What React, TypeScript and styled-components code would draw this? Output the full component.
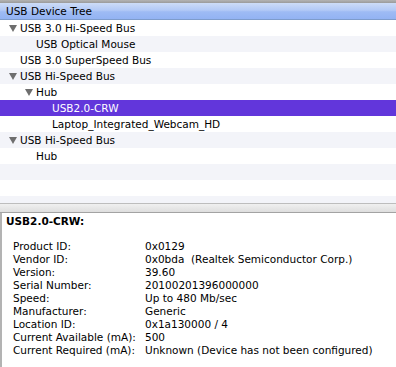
import React from "react";
import styled, { createGlobalStyle } from "styled-components";

const Global = createGlobalStyle`
  html, body { margin: 0; padding: 0; background: #fff; }
  body { font-family: "DejaVu Sans", sans-serif; font-size: 10.5px; color: #000; }
`;

const Window = styled.div`
  width: 396px;
  height: 367px;
  display: flex;
  flex-direction: column;
  overflow: hidden;
  background: #fff;
`;

const TopStrip = styled.div`
  height: 3px;
  background: linear-gradient(#b4b4b4, #9a9a9a);
  flex: none;
`;

const TreePane = styled.div`
  height: 200px;
  flex: none;
  display: flex;
  flex-direction: column;
  overflow: hidden;
`;

const Header = styled.div`
  height: 16px;
  flex: none;
  display: flex;
  align-items: center;
  padding-left: 6px;
  background: linear-gradient(#cddcf7 0%, #b2c9f6 45%, #9ebbf4 55%, #93b3f3 100%);
  border-bottom: 1px solid #7e9ccb;
`;

const Row = styled.div<{ $alt: boolean; $selected?: boolean; $level: number }>`
  height: 16px;
  flex: none;
  display: flex;
  align-items: center;
  padding-left: ${(p) => 9 + (p.$level - 1) * 16}px;
  background: ${(p) => (p.$selected ? "#6236db" : p.$alt ? "#f3f4f9" : "#fff")};
  color: ${(p) => (p.$selected ? "#fff" : "#000")};
  white-space: nowrap;
`;

const Disclosure = styled.span`
  width: 11px;
  flex: none;
  display: flex;
  align-items: center;
`;

const Splitter = styled.div`
  height: 8px;
  flex: none;
  border-top: 1px solid #bdbdbd;
  border-bottom: 1px solid #a3a3a3;
  background: linear-gradient(#f0f0f0, #dedede);
`;

const DetailPane = styled.div`
  flex: 1;
  border-left: 2px solid #b3b3b3;
  padding: 2px 0 0 4px;
  line-height: 13px;
`;

const Title = styled.div`
  font-weight: bold;
  margin-bottom: 12px;
`;

const Props = styled.div`
  display: grid;
  grid-template-columns: 132px auto;
  padding-left: 7px;
  white-space: pre;
`;

const Triangle = () => (
  <svg width="8" height="7" viewBox="0 0 8 7">
    <polygon points="0,0 8,0 4,7" fill="#6e6e6e" />
  </svg>
);

type Item = { label: string; level: number; open?: boolean; selected?: boolean };

const items: Item[] = [
  { label: "USB 3.0 Hi-Speed Bus", level: 1, open: true },
  { label: "USB Optical Mouse", level: 2 },
  { label: "USB 3.0 SuperSpeed Bus", level: 1 },
  { label: "USB Hi-Speed Bus", level: 1, open: true },
  { label: "Hub", level: 2, open: true },
  { label: "USB2.0-CRW", level: 3, selected: true },
  { label: "Laptop_Integrated_Webcam_HD", level: 3 },
  { label: "USB Hi-Speed Bus", level: 1, open: true },
  { label: "Hub", level: 2 },
  { label: "", level: 1 },
  { label: "", level: 1 },
  { label: "", level: 1 },
];

const props: [string, string][] = [
  ["Product ID:", "0x0129"],
  ["Vendor ID:", "0x0bda  (Realtek Semiconductor Corp.)"],
  ["Version:", "39.60"],
  ["Serial Number:", "20100201396000000"],
  ["Speed:", "Up to 480 Mb/sec"],
  ["Manufacturer:", "Generic"],
  ["Location ID:", "0x1a130000 / 4"],
  ["Current Available (mA):", "500"],
  ["Current Required (mA):", "Unknown (Device has not been configured)"],
];

export default function App() {
  return (
    <Window>
      <Global />
      <TopStrip />
      <TreePane>
        <Header>USB Device Tree</Header>
        {items.map((it, i) => (
          <Row key={i} $alt={i % 2 === 1} $selected={it.selected} $level={it.level}>
            <Disclosure>{it.open ? <Triangle /> : null}</Disclosure>
            {it.label}
          </Row>
        ))}
      </TreePane>
      <Splitter />
      <DetailPane>
        <Title>USB2.0-CRW:</Title>
        <Props>
          {props.map(([k, v]) => (
            <React.Fragment key={k}>
              <span>{k}</span>
              <span>{v}</span>
            </React.Fragment>
          ))}
        </Props>
      </DetailPane>
    </Window>
  );
}
